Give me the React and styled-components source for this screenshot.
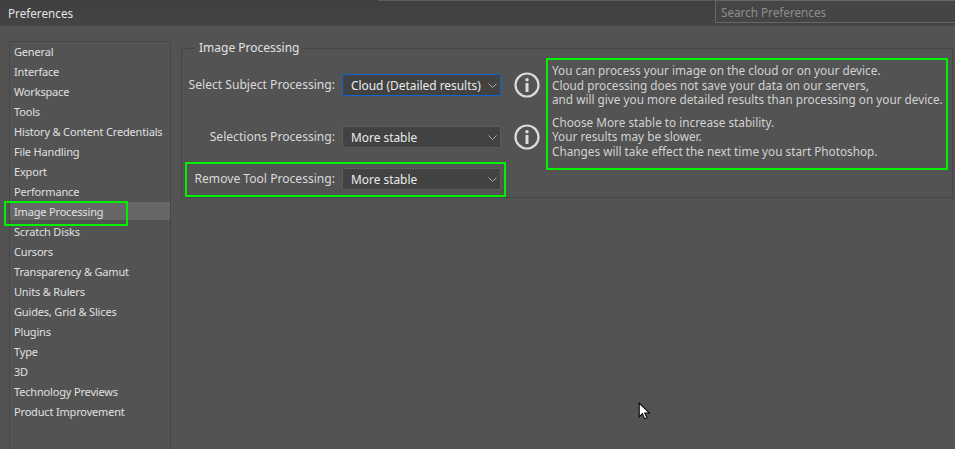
import React from "react";
import styled, { createGlobalStyle } from "styled-components";

const Global = createGlobalStyle`
  html, body {
    margin: 0;
    padding: 0;
    background: #535353;
  }
  body {
    font-family: "Noto Sans", "Liberation Sans", sans-serif;
    font-size: 11px;
    color: #dcdcdc;
  }
`;

const Window = styled.div`
  position: relative;
  width: 955px;
  height: 449px;
  overflow: hidden;
  background: #535353;
`;

const TitleBar = styled.header`
  height: 26px;
  display: flex;
  align-items: center;
  justify-content: space-between;
  padding-left: 8px;
  background:
    linear-gradient(90deg, transparent 378px, #5a5a5a 378px) 0 0 / 100% 1px no-repeat,
    linear-gradient(#3f3f3f, #444444);
`;

const Title = styled.h1`
  margin: 0;
  font-size: 11.7px;
  font-weight: 400;
  color: #e2e2e2;
`;

const Search = styled.div`
  width: 234px;
  height: 21px;
  margin-bottom: 3px;
  padding-left: 5px;
  display: flex;
  align-items: center;
  border: 1px solid #666666;
  border-right: 0;
  background: #454545;
  color: #8e8e8e;
  font-size: 11.7px;
`;

const Body = styled.div`
  display: flex;
  align-items: flex-start;
  padding: 15px 2px 0 9px;
`;

const Sidebar = styled.nav`
  position: relative;
  width: 162px;
  height: 408px;
  flex: none;
  box-sizing: border-box;
  border: 1px solid #464646;
  border-bottom: 0;
  margin-right: 10px;
`;

const Item = styled.div`
  height: 20px;
  box-sizing: border-box;
  padding-left: 4px;
  line-height: 20px;
  letter-spacing: -0.17px;
  white-space: nowrap;
  color: #e0e0e0;
  background: ${(p) =>
    p.$active ? "linear-gradient(#676767 18px, transparent 18px)" : "none"};
`;

const Marker = styled.div`
  position: absolute;
  left: -6px;
  top: 159px;
  width: 124px;
  height: 25px;
  box-sizing: border-box;
  border: 2px solid #00f000;
`;

const Group = styled.fieldset`
  flex: 1;
  min-width: 0;
  height: 157px;
  box-sizing: border-box;
  margin: 0;
  padding: 0 3px;
  border: 1px solid #464646;
  border-radius: 0;
  display: flex;
  align-items: flex-start;
`;

const Legend = styled.legend`
  margin-left: 10px;
  padding: 0 4px;
  font-size: 12px;
  line-height: 14px;
  color: #e2e2e2;
`;

const Fields = styled.div`
  width: 361px;
  flex: none;
`;

const Row = styled.div`
  display: flex;
  align-items: center;
  height: 22px;
  margin-top: ${(p) => p.$top}px;
`;

const BoxedRow = styled(Row)`
  width: 321px;
  height: 35px;
  box-sizing: border-box;
  padding-bottom: 1px;
  border: 2px solid #00f000;
`;

const Label = styled.label`
  width: ${(p) => (p.$boxed ? 155 : 157)}px;
  flex: none;
  padding: 0 7px 2px 0;
  box-sizing: border-box;
  text-align: right;
  white-space: nowrap;
  color: #dadada;
  font-size: 12.1px;
`;

const Select = styled.div`
  width: 159px;
  height: 22px;
  flex: none;
  box-sizing: border-box;
  display: flex;
  align-items: center;
  justify-content: space-between;
  padding: 0 3px 0 8px;
  background: #424242;
  border: 1px solid ${(p) => (p.$focus ? "#0f64d2" : "#5c5c5c")};
  border-radius: 2px;
  color: #ececec;
  font-size: 11.9px;
  white-space: nowrap;
`;

const Info = styled.svg`
  width: 26px;
  height: 26px;
  flex: none;
  margin-left: 13px;
`;

const Notes = styled.div`
  width: 402px;
  height: 112px;
  flex: none;
  box-sizing: border-box;
  margin: 3px 0 0 0;
  padding: 3px 0 0 4px;
  border: 2px solid #00f000;
  color: #d2d2d2;
  line-height: 14.6px;
  font-size: 11.77px;
  white-space: nowrap;
`;

const Para = styled.p`
  margin: 0 0 8px;
`;

const Cursor = styled.svg`
  position: absolute;
  left: 638px;
  top: 402px;
`;

const Chevron = () => (
  <svg width="9" height="5" viewBox="0 0 9 5" fill="none">
    <path d="M.5.5l4 4 4-4" stroke="#a6a6a6" strokeWidth="1" />
  </svg>
);

const InfoIcon = () => (
  <Info viewBox="0 0 26 26">
    <circle cx="13" cy="13" r="11.5" fill="none" stroke="#dcdcdc" strokeWidth="2.2" />
    <circle cx="13" cy="7.8" r="1.7" fill="#dcdcdc" />
    <rect x="11.5" y="11" width="3" height="9" fill="#dcdcdc" />
  </Info>
);

const items = [
  "General",
  "Interface",
  "Workspace",
  "Tools",
  "History & Content Credentials",
  "File Handling",
  "Export",
  "Performance",
  "Image Processing",
  "Scratch Disks",
  "Cursors",
  "Transparency & Gamut",
  "Units & Rulers",
  "Guides, Grid & Slices",
  "Plugins",
  "Type",
  "3D",
  "Technology Previews",
  "Product Improvement",
];

export default function App() {
  return (
    <Window>
      <Global />
      <TitleBar>
        <Title>Preferences</Title>
        <Search>Search Preferences</Search>
      </TitleBar>
      <Body>
        <Sidebar>
          {items.map((item) => (
            <Item key={item} $active={item === "Image Processing"}>
              {item}
            </Item>
          ))}
          <Marker />
        </Sidebar>
        <Group>
          <Legend>Image Processing</Legend>
          <Fields>
            <Row $top={19}>
              <Label>Select Subject Processing:</Label>
              <Select $focus>
                Cloud (Detailed results)
                <Chevron />
              </Select>
              <InfoIcon />
            </Row>
            <Row $top={30}>
              <Label>Selections Processing:</Label>
              <Select>
                More stable
                <Chevron />
              </Select>
              <InfoIcon />
            </Row>
            <BoxedRow $top={14}>
              <Label $boxed>Remove Tool Processing:</Label>
              <Select>
                More stable
                <Chevron />
              </Select>
            </BoxedRow>
          </Fields>
          <Notes>
            <Para>
              You can process your image on the cloud or on your device.
              <br />
              Cloud processing does not save your data on our servers,
              <br />
              and will give you more detailed results than processing on your device.
            </Para>
            <Para>
              Choose More stable to increase stability.
              <br />
              Your results may be slower.
              <br />
              Changes will take effect the next time you start Photoshop.
            </Para>
          </Notes>
        </Group>
      </Body>
      <Cursor width="13" height="19" viewBox="0 0 12 18">
        <path
          d="M1 1v13l3-3 2.2 5 2.2-1-2.2-4.6H10.500z"
          fill="#fff"
          stroke="#000"
          strokeWidth="1"
        />
      </Cursor>
    </Window>
  );
}
